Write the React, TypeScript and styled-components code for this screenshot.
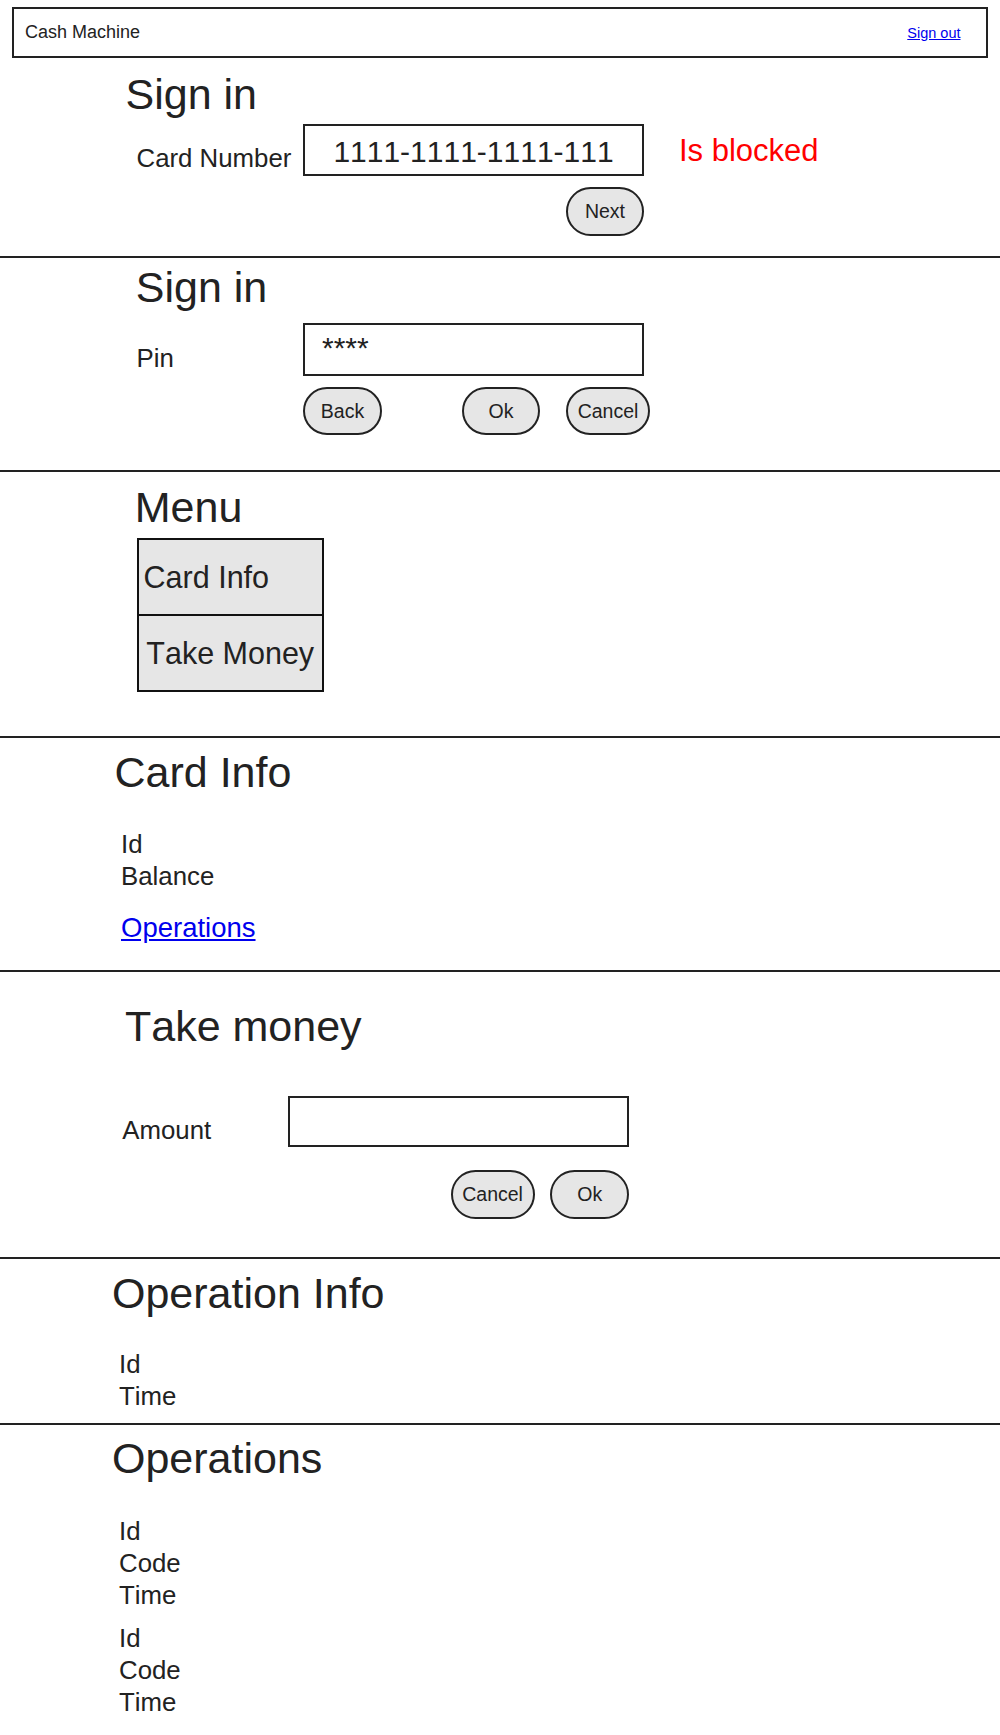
import React from "react";
import styled, { createGlobalStyle } from "styled-components";

const GlobalStyle = createGlobalStyle`
  html, body { margin: 0; padding: 0; background: #ffffff; }
  body {
    font-family: "Liberation Sans", Arial, Helvetica, sans-serif;
    font-kerning: none;
    color: #222222;
    width: 1000px;
  }
  button { font-kerning: none; }
`;

const Page = styled.div`
  width: 1000px;
  min-height: 1735px;
  display: flex;
  flex-direction: column;
`;

const Header = styled.header`
  margin: 7px 12px 0;
  height: 51px;
  box-sizing: border-box;
  border: 2px solid #222222;
  display: flex;
  align-items: baseline;
  justify-content: space-between;
  padding: 12.5px 25.5px 0 11px;
`;

const AppTitle = styled.div`
  font-size: 18px;
  line-height: 20px;
`;

const SignOut = styled.a`
  font-size: 14.5px;
  line-height: 20px;
  color: #0000ee;
  text-decoration: underline;
  cursor: pointer;
`;

const Section = styled.section<{ $pt: number; $pb: number; $last?: boolean }>`
  box-sizing: border-box;
  padding: ${(p) => p.$pt}px 0 ${(p) => p.$pb}px;
  border-bottom: ${(p) => (p.$last ? "none" : "2px solid #222222")};
  display: flex;
  flex-direction: column;
  align-items: flex-start;
`;

const Heading = styled.h2<{ $ml: number }>`
  margin: 0 0 0 ${(p) => p.$ml}px;
  font-size: 43px;
  font-weight: 400;
  line-height: 48px;
  white-space: nowrap;
`;

const FormGrid = styled.div<{ $mt: number; $ml: number; $gap: number; $label: number }>`
  margin: ${(p) => p.$mt}px 0 0 ${(p) => p.$ml}px;
  display: grid;
  grid-template-columns: ${(p) => p.$label}px 341px auto;
  row-gap: ${(p) => p.$gap}px;
  align-items: start;
`;

const Label = styled.div<{ $pt: number }>`
  font-size: 25.8px;
  line-height: 30px;
  padding-top: ${(p) => p.$pt}px;
  white-space: nowrap;
`;

const Field = styled.div<{ $h: number }>`
  box-sizing: border-box;
  width: 341px;
  height: ${(p) => p.$h}px;
  border: 2px solid #222222;
  background: #ffffff;
  font-size: 30px;
  white-space: nowrap;
  overflow: hidden;
`;

const CenteredValue = styled.div`
  text-align: center;
  padding-top: 4px;
  line-height: 44px;
`;

const MaskedValue = styled.div`
  padding: 8px 0 0 17px;
  line-height: 30px;
`;

const Status = styled.div`
  margin-left: 35px;
  padding-top: 9.3px;
  font-size: 31px;
  line-height: 36px;
  color: #ff0000;
  white-space: nowrap;
`;

const ButtonRow = styled.div<{ $justify: string }>`
  grid-column: 2;
  display: flex;
  justify-content: ${(p) => p.$justify};
  overflow: visible;
  width: 341px;
`;

const Pill = styled.button<{ $w: number; $h: number; $ml?: number }>`
  box-sizing: border-box;
  flex: none;
  width: ${(p) => p.$w}px;
  height: ${(p) => p.$h}px;
  margin-left: ${(p) => p.$ml ?? 0}px;
  padding: 0;
  border: 2px solid #222222;
  border-radius: 9999px;
  background: #e6e6e6;
  font-family: inherit;
  font-size: 19.5px;
  line-height: 24px;
  color: #222222;
  display: flex;
  align-items: center;
  justify-content: center;
  cursor: pointer;
`;

const MenuBox = styled.div<{ $mt: number; $ml: number }>`
  margin: ${(p) => p.$mt}px 0 0 ${(p) => p.$ml}px;
  width: 187px;
  box-sizing: border-box;
  border: 2px solid #111111;
  background: #e6e6e6;
  display: flex;
  flex-direction: column;
`;

const MenuItem = styled.div<{ $pl: number }>`
  height: 74px;
  display: flex;
  align-items: center;
  padding-left: ${(p) => p.$pl}px;
  font-size: 30.5px;
  line-height: 34px;
  white-space: nowrap;
  cursor: pointer;
  & + & {
    border-top: 2px solid #111111;
  }
`;

const InfoList = styled.div<{ $mt: number; $ml: number }>`
  margin: ${(p) => p.$mt}px 0 0 ${(p) => p.$ml}px;
  display: flex;
  flex-direction: column;
  font-size: 25.8px;
  line-height: 32px;
`;

const InfoLink = styled.a<{ $mt: number; $ml: number }>`
  margin: ${(p) => p.$mt}px 0 0 ${(p) => p.$ml}px;
  font-size: 27.5px;
  line-height: 32px;
  color: #0000ee;
  text-decoration: underline;
  cursor: pointer;
`;

const OperationsList = styled.div<{ $mt: number; $ml: number }>`
  margin: ${(p) => p.$mt}px 0 0 ${(p) => p.$ml}px;
  display: flex;
  flex-direction: column;
  gap: 10.7px;
`;

const operations = [
  { key: "op1", fields: ["Id", "Code", "Time"] },
  { key: "op2", fields: ["Id", "Code", "Time"] },
];

export default function App() {
  return (
    <>
      <GlobalStyle />
      <Page>
        <Header>
          <AppTitle>Cash Machine</AppTitle>
          <SignOut>Sign out</SignOut>
        </Header>

        <Section $pt={12.2} $pb={20}>
          <Heading $ml={125.5}>Sign in</Heading>
          <FormGrid $mt={5.8} $ml={136.5} $gap={11} $label={166.5}>
            <Label $pt={19.1}>Card Number</Label>
            <Field $h={52}>
              <CenteredValue>1111-1111-1111-111</CenteredValue>
            </Field>
            <Status>Is blocked</Status>
            <ButtonRow $justify="flex-end">
              <Pill $w={78} $h={49}>Next</Pill>
            </ButtonRow>
          </FormGrid>
        </Section>

        <Section $pt={5.2} $pb={35}>
          <Heading $ml={135.8}>Sign in</Heading>
          <FormGrid $mt={11.8} $ml={136.5} $gap={11} $label={166.5}>
            <Label $pt={20.1}>Pin</Label>
            <Field $h={53}>
              <MaskedValue>****</MaskedValue>
            </Field>
            <span />
            <ButtonRow $justify="flex-start">
              <Pill $w={79} $h={48}>Back</Pill>
              <Pill $w={78} $h={48} $ml={80}>Ok</Pill>
              <Pill $w={84} $h={48} $ml={26}>Cancel</Pill>
            </ButtonRow>
          </FormGrid>
        </Section>

        <Section $pt={10.9} $pb={44}>
          <Heading $ml={134.8}>Menu</Heading>
          <MenuBox $mt={7.1} $ml={137.3}>
            <MenuItem $pl={4.3}>Card Info</MenuItem>
            <MenuItem $pl={7}>Take Money</MenuItem>
          </MenuBox>
        </Section>

        <Section $pt={10.2} $pb={26.4}>
          <Heading $ml={114.5}>Card Info</Heading>
          <InfoList $mt={31.7} $ml={121}>
            <span>Id</span>
            <span>Balance</span>
          </InfoList>
          <InfoLink $mt={19.7} $ml={121}>Operations</InfoLink>
        </Section>

        <Section $pt={29.9} $pb={38}>
          <Heading $ml={125}>Take money</Heading>
          <FormGrid $mt={46.15} $ml={122.3} $gap={23} $label={166}>
            <Label $pt={19.1}>Amount</Label>
            <Field $h={51} />
            <span />
            <ButtonRow $justify="flex-end">
              <Pill $w={84} $h={49}>Cancel</Pill>
              <Pill $w={79} $h={49} $ml={15.7}>Ok</Pill>
            </ButtonRow>
          </FormGrid>
        </Section>

        <Section $pt={10.45} $pb={10.5}>
          <Heading $ml={112}>Operation Info</Heading>
          <InfoList $mt={31.05} $ml={119}>
            <span>Id</span>
            <span>Time</span>
          </InfoList>
        </Section>

        <Section $pt={8.85} $pb={0} $last>
          <Heading $ml={112}>Operations</Heading>
          <OperationsList $mt={33.3} $ml={119}>
            {operations.map((op) => (
              <InfoList key={op.key} $mt={0} $ml={0}>
                {op.fields.map((f) => (
                  <span key={f}>{f}</span>
                ))}
              </InfoList>
            ))}
          </OperationsList>
        </Section>
      </Page>
    </>
  );
}
